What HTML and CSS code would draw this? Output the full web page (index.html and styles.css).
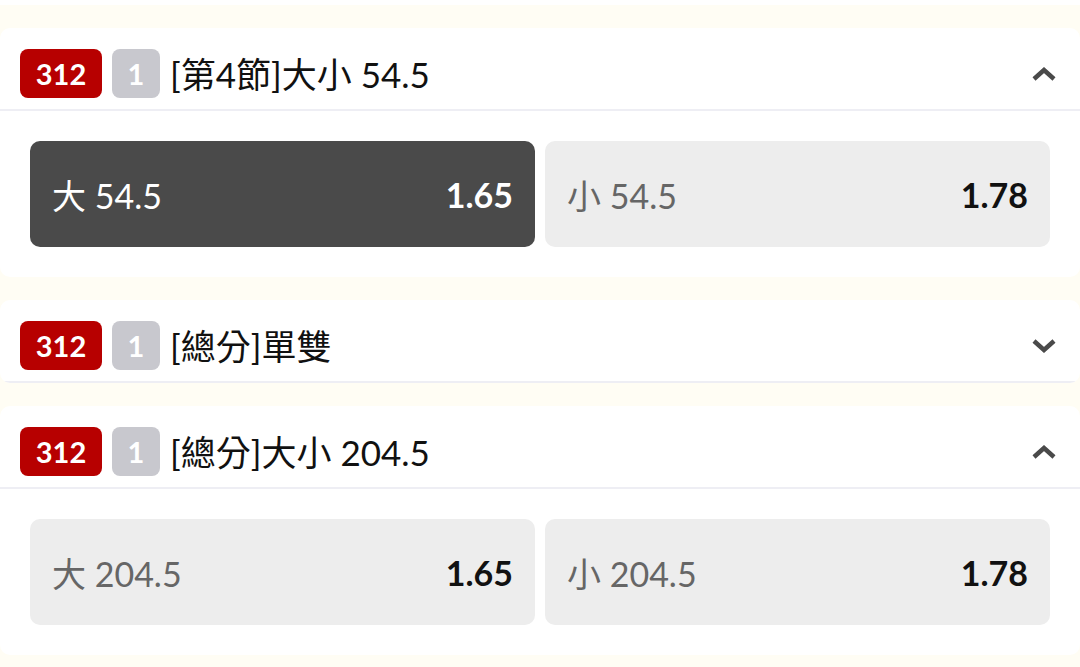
FILE: index.html
```html
<!DOCTYPE html>
<html lang="zh-Hant">
<head>
    <meta charset="UTF-8">
    <meta name="viewport" content="width=device-width, initial-scale=1.0">
    <title>Markets</title>
    <link rel="stylesheet" href="styles.css">
</head>
<body>
    <div class="top-strip"></div>

    <div class="market">
        <div class="market-header">
            <span class="badge badge-code">312</span>
            <span class="badge badge-period">1</span>
            <span class="market-title">[第4節]大小 54.5</span>
            <svg class="chevron" width="24" height="14" viewBox="0 0 24 14"><polyline points="2,12 12,3 22,12" /></svg>
        </div>
        <div class="options">
            <div class="option selected">
                <span class="option-label">大 54.5</span>
                <span class="option-odds">1.65</span>
            </div>
            <div class="option">
                <span class="option-label">小 54.5</span>
                <span class="option-odds">1.78</span>
            </div>
        </div>
    </div>

    <div class="market">
        <div class="market-header">
            <span class="badge badge-code">312</span>
            <span class="badge badge-period">1</span>
            <span class="market-title">[總分]單雙</span>
            <svg class="chevron" width="24" height="14" viewBox="0 0 24 14"><polyline points="2,2 12,11 22,2" /></svg>
        </div>
    </div>

    <div class="market">
        <div class="market-header">
            <span class="badge badge-code">312</span>
            <span class="badge badge-period">1</span>
            <span class="market-title">[總分]大小 204.5</span>
            <svg class="chevron" width="24" height="14" viewBox="0 0 24 14"><polyline points="2,12 12,3 22,12" /></svg>
        </div>
        <div class="options">
            <div class="option">
                <span class="option-label">大 204.5</span>
                <span class="option-odds">1.65</span>
            </div>
            <div class="option">
                <span class="option-label">小 204.5</span>
                <span class="option-odds">1.78</span>
            </div>
        </div>
    </div>
</body>
</html>
```

FILE: styles.css
```css
:root {
    --page-bg: #FFFDF4;
    --card-bg: #fff;
    --divider: #EEEEF4;
    --badge-red: #B70000;
    --badge-gray: #C8C8CE;
    --option-bg: #EDEDED;
    --option-active: #4A4A4A;
    --label-color: #666;
    --text-color: #111;
}

body {
    font-family: Lato, "Noto Sans CJK TC", sans-serif;
    margin: 0;
    background-color: var(--page-bg);
    color: var(--text-color);
}

.top-strip {
    height: 5px;
    background-color: var(--card-bg);
    margin-bottom: 23px;
}

.market {
    background-color: var(--card-bg);
    border-radius: 10px;
    overflow: hidden;
    margin-bottom: 23px;
}

.market-header {
    display: flex;
    align-items: center;
    height: 49px;
    padding: 21px 24px 11px 20px;
    border-bottom: 2px solid var(--divider);
}

.badge {
    height: 49px;
    display: flex;
    align-items: center;
    justify-content: center;
    border-radius: 8px;
    color: #fff;
    font-size: 29px;
    font-weight: 700;
    margin-right: 10px;
}

.badge-code {
    width: 82px;
    background-color: var(--badge-red);
}

.badge-period {
    width: 48px;
    background-color: var(--badge-gray);
}

.market-title {
    font-size: 35px;
    font-weight: 400;
    line-height: 1.2;
}

.chevron {
    margin-left: auto;
    fill: none;
    stroke: #4a4a4a;
    stroke-width: 4.5;
}

.options {
    display: flex;
    gap: 10px;
    padding: 30px;
}

.option {
    flex: 1;
    height: 106px;
    display: flex;
    align-items: center;
    justify-content: space-between;
    padding: 0 22px;
    border-radius: 10px;
    background-color: var(--option-bg);
    font-size: 34px;
}

.option-label {
    color: var(--label-color);
}

.option-odds {
    font-weight: 700;
    color: var(--text-color);
}

.option.selected {
    background-color: var(--option-active);
}

.option.selected .option-label,
.option.selected .option-odds {
    color: #fff;
}
```
